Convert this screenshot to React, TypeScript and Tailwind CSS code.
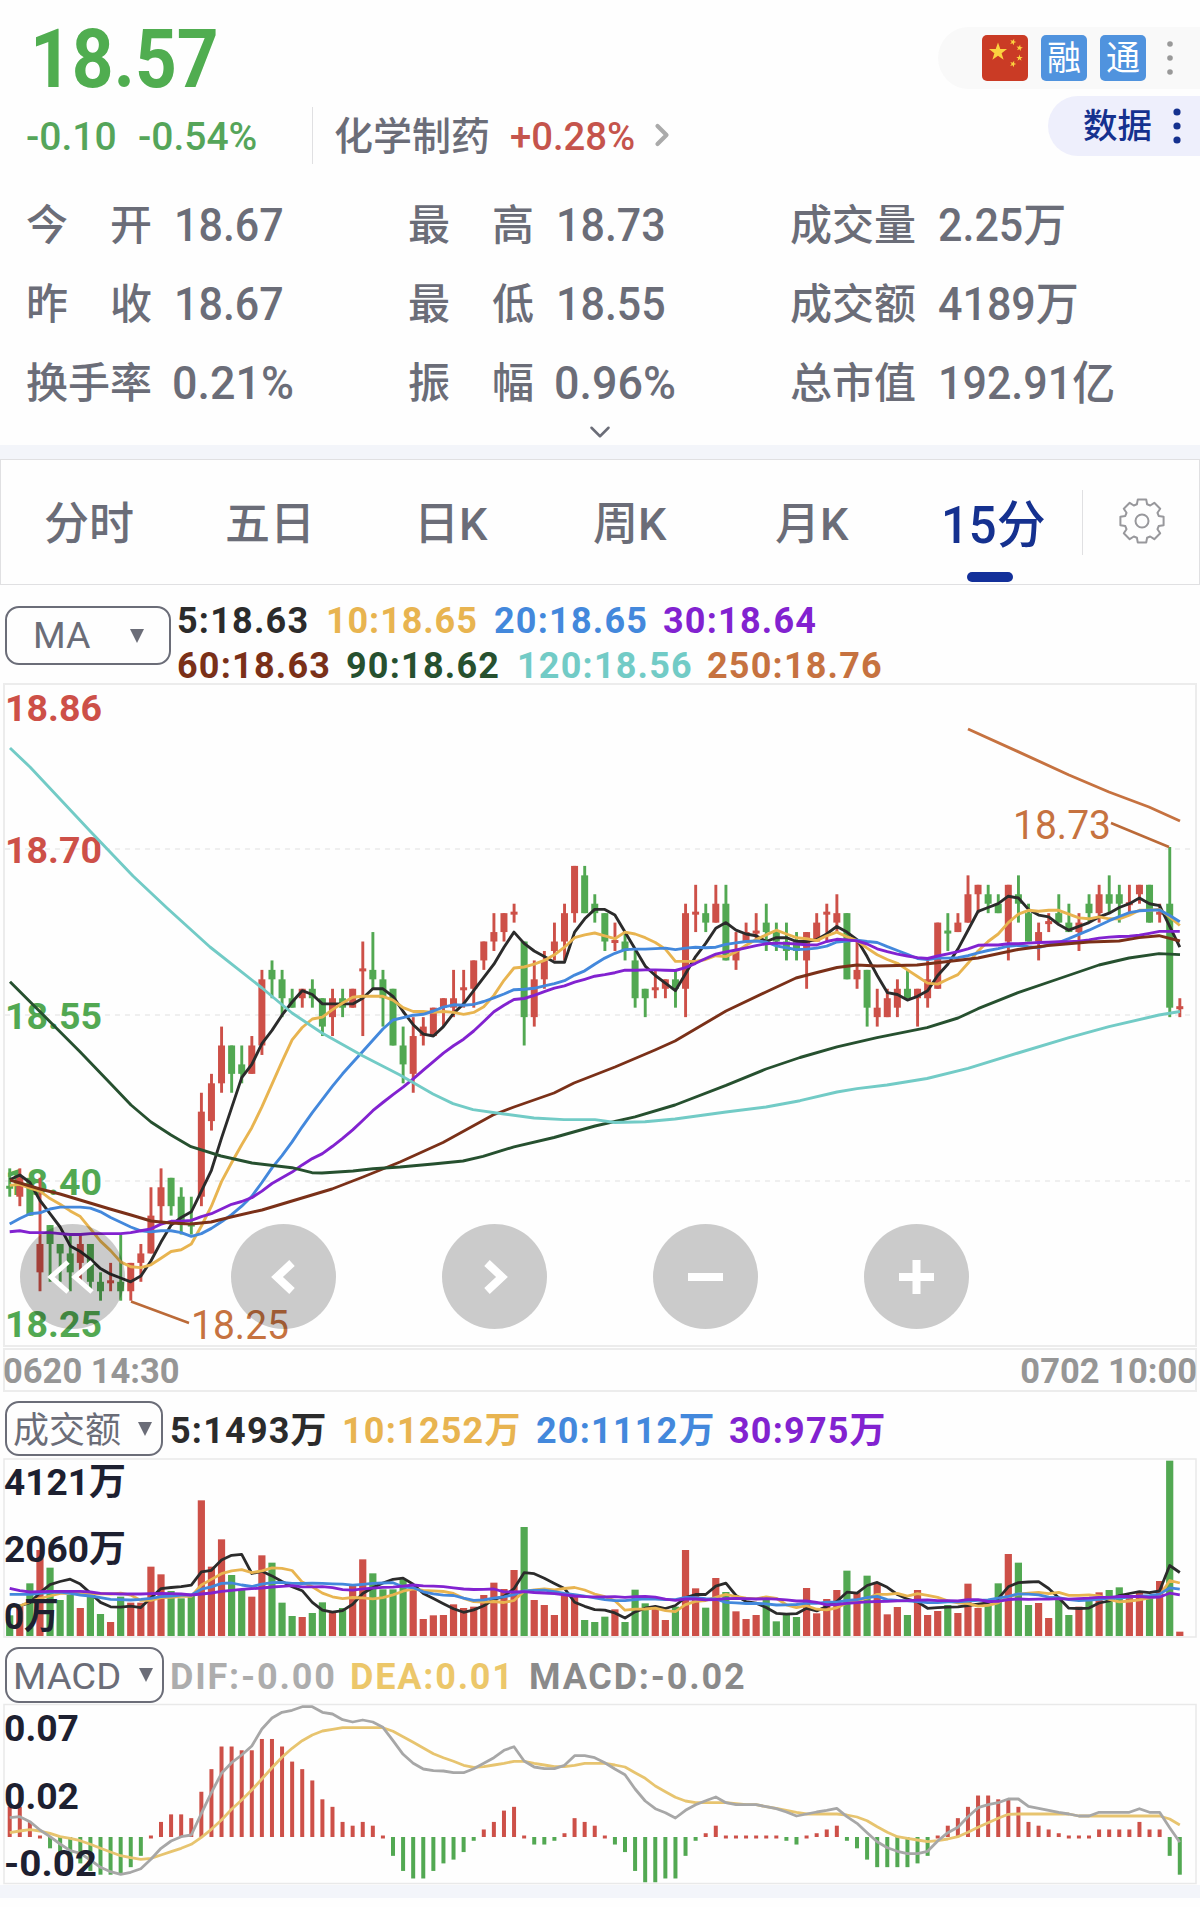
import { ChevronDown, ChevronRight } from "lucide-react";

const RED = "#cd5048";
const GREEN = "#52a852";
const INK = "#2b2b2b";
const GOLD = "#e8b450";
const BLUE = "#4388dc";
const PURPLE = "#8222d0";
const BROWN = "#7a3018";
const FOREST = "#26502f";
const TEAL = "#72cbc6";
const ORANGE = "#c67240";

// [up, high, body top, body bottom, low] in cents above 18.00
const candles: number[][] = [
  [0, 39, 37, 37, 36], [1, 39, 38, 36, 35], [0, 38, 38, 34, 34], [1, 38, 31, 28, 26], [0, 33, 33, 31, 27],
  [0, 31, 31, 30, 27], [0, 32, 30, 28, 26], [1, 32, 31, 29, 27], [0, 31, 31, 27, 26], [0, 28, 27, 26, 25],
  [1, 29, 27, 27, 26], [0, 32, 27, 26, 25], [1, 29, 29, 26, 25], [1, 31, 30, 29, 27], [1, 37, 34, 30, 30],
  [1, 39, 37, 35, 33], [0, 38, 38, 35, 34], [0, 37, 36, 33, 32], [0, 36, 33, 33, 32], [1, 47, 45, 36, 35],
  [1, 49, 48, 44, 43], [1, 54, 52, 48, 47], [0, 52, 52, 49, 47], [0, 52, 50, 49, 48], [1, 53, 52, 49, 49],
  [1, 60, 59, 52, 51], [0, 61, 60, 59, 57], [0, 60, 59, 57, 55], [0, 58, 57, 56, 56], [1, 58, 58, 57, 56],
  [0, 59, 58, 57, 56], [0, 57, 57, 54, 53], [1, 58, 57, 55, 53], [0, 58, 57, 56, 55], [1, 58, 58, 56, 56],
  [1, 63, 60, 60, 53], [0, 64, 60, 59, 58], [0, 60, 59, 57, 54], [0, 58, 58, 52, 52], [0, 54, 52, 50, 48],
  [1, 55, 53, 49, 47], [1, 55, 54, 53, 52], [1, 56, 56, 53, 53], [1, 57, 57, 56, 54], [1, 60, 57, 56, 55],
  [1, 60, 58, 58, 56], [1, 61, 61, 58, 56], [1, 63, 63, 61, 60], [1, 66, 64, 63, 62], [1, 66, 66, 64, 63],
  [1, 67, 66, 66, 65], [0, 63, 63, 55, 52], [1, 61, 59, 55, 54], [1, 62, 61, 59, 58], [1, 65, 63, 62, 61],
  [1, 67, 66, 63, 61], [1, 71, 71, 66, 65], [0, 71, 70, 66, 66], [0, 68, 67, 66, 65], [0, 66, 66, 63, 62],
  [1, 65, 63, 63, 62], [0, 64, 63, 62, 61], [0, 62, 61, 57, 56], [0, 58, 58, 57, 55], [1, 60, 58, 58, 57],
  [1, 59, 59, 58, 57], [0, 60, 59, 58, 56], [1, 67, 66, 58, 55], [1, 69, 66, 66, 64], [0, 67, 66, 65, 64],
  [1, 69, 67, 65, 65], [0, 69, 67, 61, 61], [1, 64, 62, 61, 60], [1, 65, 64, 63, 63], [1, 66, 64, 64, 63],
  [0, 67, 65, 64, 62], [0, 65, 64, 63, 62], [0, 65, 63, 62, 61], [0, 64, 63, 62, 61], [1, 64, 64, 61, 58],
  [1, 66, 65, 63, 63], [1, 67, 66, 66, 63], [1, 68, 66, 65, 64], [0, 66, 66, 59, 59], [1, 63, 60, 59, 58],
  [0, 60, 60, 56, 54], [1, 58, 56, 55, 54], [1, 58, 57, 55, 55], [1, 59, 58, 56, 55], [0, 60, 58, 57, 57],
  [1, 58, 58, 57, 54], [1, 61, 59, 57, 56], [1, 65, 65, 58, 58], [0, 66, 64, 64, 62], [1, 66, 65, 64, 64],
  [1, 70, 68, 65, 65], [1, 69, 69, 68, 66], [0, 69, 68, 67, 66], [0, 68, 67, 66, 66], [1, 69, 69, 63, 61],
  [0, 70, 68, 67, 65], [0, 67, 66, 63, 63], [1, 65, 64, 63, 61], [1, 66, 65, 65, 64], [0, 68, 66, 65, 65],
  [0, 67, 65, 64, 64], [1, 66, 65, 64, 62], [0, 68, 67, 66, 65], [1, 69, 68, 66, 65], [0, 70, 68, 67, 66],
  [0, 69, 68, 67, 65], [1, 69, 67, 67, 66], [1, 69, 69, 68, 67], [0, 69, 69, 65, 65], [1, 67, 66, 66, 65],
  [0, 73, 67, 56, 55], [1, 57, 56, 56, 55],
];

const turnover = [
  62, 88, 158, 258, 205, 108, 123, 84, 123, 66, 42, 118, 100, 100, 208, 185, 135, 113, 123, 407, 208, 290, 183, 138, 118,
  242, 220, 100, 60, 57, 69, 101, 70, 84, 153, 230, 188, 140, 140, 170, 138, 51, 62, 63, 95, 84, 88, 123, 160, 141,
  198, 327, 108, 93, 63, 123, 118, 48, 42, 58, 80, 42, 139, 98, 85, 48, 88, 258, 143, 85, 174, 132, 74, 51, 63,
  108, 44, 63, 57, 144, 68, 111, 138, 196, 131, 181, 158, 65, 87, 63, 138, 63, 75, 93, 69, 157, 84, 93, 158, 246,
  220, 93, 99, 54, 108, 63, 88, 105, 131, 138, 146, 118, 131, 118, 165, 526, 13,
];

const macd = [
  8, 8, 4, 0, -3, -4, -5, -7, -9, -10, -10, -10, -8, -5, 0, 4, 6, 6, 5, 12, 18, 24, 24, 23, 23, 26, 26, 24, 20, 18,
  15, 10, 8, 4, 3, 4, 3, 0, -5, -9, -11, -11, -9, -7, -6, -4, -1, 2, 4, 7, 8, 0, -2, -2, -1, 1, 5, 4, 3, 0,
  -2, -4, -9, -12, -12, -11, -11, -5, -1, 1, 3, 0, 0, 0, 0, 0, 0, -1, -2, 0, 1, 2, 3, -1, -3, -6, -8, -8, -8, -8,
  -7, -5, 0, 3, 5, 8, 11, 11, 10, 10, 8, 4, 3, 2, 1, 0, 0, 0, 2, 2, 2, 2, 4, 2, 2, -5, -10,
];

const dif = [
  533, 530, 545, 570, 590, 612, 632, 640, 660, 682, 695, 703, 697, 686, 658, 625, 603, 590, 585, 520, 458, 400, 368, 345,
  318, 267, 234, 217, 211, 200, 200, 217, 222, 239, 246, 240, 246, 262, 302, 343, 370, 387, 392, 393, 398, 398, 386, 370,
  353, 331, 320, 363, 381, 386, 386, 376, 347, 347, 353, 368, 387, 404, 447, 483, 506, 518, 534, 511, 494, 482, 471, 488,
  494, 494, 494, 500, 506, 516, 528, 522, 516, 511, 505, 530, 550, 578, 605, 623, 634, 641, 641, 634, 603, 578, 562, 530,
  503, 494, 488, 477, 477, 499, 505, 511, 517, 522, 528, 528, 517, 517, 517, 517, 506, 517, 517, 563, 607,
];

const dea = [
  578, 573, 569, 573, 580, 590, 595, 602, 613, 625, 636, 647, 653, 658, 655, 645, 635, 625, 613, 592, 568, 540, 508, 480,
  450, 417, 383, 352, 325, 302, 285, 273, 268, 263, 263, 263, 263, 263, 274, 290, 307, 324, 341, 353, 364, 376, 382, 380,
  375, 370, 364, 364, 370, 375, 380, 380, 376, 370, 370, 370, 375, 381, 398, 415, 438, 455, 472, 483, 488, 488, 488, 488,
  491, 494, 494, 500, 505, 511, 517, 522, 522, 522, 522, 525, 531, 542, 560, 577, 590, 595, 600, 605, 602, 597, 590, 577,
  562, 548, 535, 523, 522, 522, 522, 522, 522, 522, 528, 528, 528, 528, 528, 528, 528, 528, 528, 537, 555,
];

// values of each average before its window is filled by the bars on screen
const priceSeeds: Record<number, number[]> = {
  5: [37.8, 38.3, 37.5, 35.6],
  10: [37.2, 37.3, 36.9, 36.6, 35.8, 35.2, 34.5, 33.9, 32.6],
  20: [33.1, 33.7, 34.2, 34.3, 34.7, 34.9, 34.9, 34.9, 34.8, 34.4, 33.8, 33.3, 32.8, 32.4, 32.3, 32.4, 32.4, 32.2, 31.8],
  30: [32.3, 32.4, 32.2, 32.2, 32.2, 32.1, 32, 32, 32.1, 32.1, 32.1, 32.1, 32.2, 32.4, 32.6, 33.1, 33.4, 33.4, 33.5, 33.9,
    34.2, 34.7, 35.2, 35.5, 35.9, 36.6, 37.4, 38, 38.6],
};
const turnoverSeeds: Record<number, number[]> = {
  5: [88, 90, 100, 130],
  10: [88, 90, 103, 113, 120, 128, 128, 128, 126],
  20: [125, 125, 125, 128, 131, 132, 128, 123, 120, 115, 110, 109, 108, 110, 113, 118, 120, 123, 123],
  30: [143, 136, 132, 133, 134, 134, 134, 134, 132, 128, 127, 126, 126, 126, 127, 128, 127, 126, 123, 126, 129, 134, 137,
    140, 142, 144, 147, 149, 151],
};

const longAverages = [
  { color: BROWN, points: "10,1180 40,1189 60,1194 80,1200 110,1209 131,1215 151,1221 171,1223 191,1224 211,1222 231,1217 262,1210 302,1198 332,1189 363,1177 400,1162 443,1142.5 493,1115 514,1107 554,1093 574,1083 615,1067 655,1050 675,1041 726,1011 766,992 796,978 817,972.5 837,967.5 857,965 877,966 917,965 948,961.5 978,958 1018,949.5 1048,945.5 1089,942 1119,941 1139,937.6 1159,935.7 1180,941" },
  { color: FOREST, points: "10,981.7 50,1021.7 80,1051.7 110,1083 131,1105 151,1122 171,1135 191,1146.7 221,1156 252,1163 292,1167.7 312,1172.7 322,1173 353,1171 373,1168.7 400,1167 433,1164 463,1161 483,1156.4 514,1146.8 554,1137.5 595,1126 635,1116.8 675,1105 726,1085.4 766,1069 800,1057.5 837,1046.9 877,1037.7 927,1027.6 958,1018 978,1008.7 1018,992.7 1058,979 1099,965 1129,958 1159,953.6 1180,954.6" },
  { color: TEAL, points: "10,748 30,767 60,799 90,831 133,876 167,908 210,947 262,988 292,1013 322,1033 363,1056 400,1075 433,1094 453,1103.6 473,1109.6 504,1114 534,1118 564,1119.6 595,1119.6 615,1122.5 645,1121.8 675,1119 726,1112 766,1107 800,1100.7 837,1092 857,1088.6 887,1085 927,1078.5 968,1068.4 1018,1053 1069,1037.7 1109,1026.6 1159,1015 1180,1011.5" },
  { color: ORANGE, points: "968,729 1018,751.6 1069,775 1109,792 1149,807 1180,821" },
];

const barX = (i: number) => 9.7 + 10.087 * i;
const priceY = (p: number) => 847 + (73 - p) * 9.452;

function average(values: number[], n: number, seeds: number[]) {
  return values.map((_, i) => {
    if (i < n - 1) return seeds[i];
    let sum = 0;
    for (let k = i - n + 1; k <= i; k++) sum += values[k];
    return sum / n;
  });
}

function toPoints(values: number[], y: (v: number) => number) {
  return values.map((v, i) => `${barX(i).toFixed(1)},${y(v).toFixed(1)}`).join(" ");
}

const closes = candles.map(([up, , top, bottom]) => (up ? top : bottom));
const shortAverages = [
  { n: 5, color: INK },
  { n: 10, color: GOLD },
  { n: 20, color: BLUE },
  { n: 30, color: PURPLE },
];

type LabelProps = { x: number; y: number; w: number; size?: number; fill: string; weight?: number; children: string };

function Label({ x, y, w, size = 37, fill, weight = 700, children }: LabelProps) {
  return (
    <text x={x} y={y} fontSize={size} fontWeight={weight} fill={fill} textLength={w} lengthAdjust="spacingAndGlyphs">
      {children}
    </text>
  );
}

function PriceChart() {
  return (
    <svg className="absolute inset-0" width="1200" height="664" viewBox="0 683 1200 664">
      <rect x="4" y="684" width="1192" height="662" fill="none" stroke="#ececec" strokeWidth="2" />
      {[849, 1015, 1181].map((y) => (
        <line key={y} x1="5" x2="1190" y1={y} y2={y} stroke="#efefef" strokeWidth="2" strokeDasharray="5 5" />
      ))}
      <Label x={5} y={721} w={97} fill={RED}>18.86</Label>
      <Label x={5} y={863} w={97} fill={RED}>18.70</Label>
      <Label x={5} y={1028.500} w={97} fill={GREEN}>18.55</Label>
      <Label x={5} y={1194.500} w={97} fill={GREEN}>18.40</Label>
      <Label x={5} y={1337} w={97} fill={GREEN}>18.25</Label>
      {candles.map(([up, high, top, bottom, low], i) => (
        <g key={i} fill={up ? RED : GREEN}>
          <rect x={barX(i) - 1.4} y={priceY(high)} width="2.9" height={priceY(low) - priceY(high)} />
          <rect x={barX(i) - 3.5} y={top === bottom ? priceY(top) - 1.5 : priceY(top)} width="7" height={Math.max(3, priceY(bottom) - priceY(top))} />
        </g>
      ))}
      <g fill="none" strokeWidth="2.9" strokeLinejoin="round">
        {shortAverages.map(({ n, color }) => (
          <polyline key={n} points={toPoints(average(closes, n, priceSeeds[n]), priceY)} stroke={color} />
        ))}
        {longAverages.map(({ color, points }) => (
          <polyline key={color} points={points} stroke={color} />
        ))}
        <path d="M131 1301.5 189 1323M1111 823 1169 847" stroke="#bb6a38" strokeWidth="2.5" />
      </g>
      <Label x={191} y={1339} w={98} size={40} fill={ORANGE} weight={400}>18.25</Label>
      <Label x={1013} y={838.500} w={98} size={40} fill={ORANGE} weight={400}>18.73</Label>
    </svg>
  );
}

function ChartControls() {
  const icons = [
    "M38 37 21 52l17 15M62 37 45 52l17 15",
    "M61 39 46 53l15 14",
    "M45 39l15 14-15 14",
    "M35 53h35",
    "M35 53h35M52.500 36v34",
  ];
  return (
    <div className="absolute left-5 top-[541px] flex gap-[106px]">
      {icons.map((d, i) => (
        <button key={d} className="h-[105px] w-[105px] rounded-full bg-black/20">
          <svg width="105" height="105" fill="none" stroke="white" strokeWidth={i === 0 ? 5 : 8}>
            <path d={d} transform={i === 0 ? "translate(10 1)" : undefined} />
          </svg>
        </button>
      ))}
    </div>
  );
}

function TurnoverChart() {
  return (
    <svg className="block" width="1200" height="182" viewBox="0 1457 1200 182">
      <rect x="4" y="1459" width="1192" height="178" fill="none" stroke="#e9e9e9" strokeWidth="1.500" />
      {turnover.map((v, i) => (
        <rect key={i} x={barX(i) - 3.6} y={1636 - v / 3} width="7.200" height={v / 3} fill={candles[i][0] ? RED : GREEN} />
      ))}
      {shortAverages.map(({ n, color }) => (
        <polyline key={n} fill="none" strokeWidth="2.800" strokeLinejoin="round" stroke={color} points={toPoints(average(turnover, n, turnoverSeeds[n]), (v) => 1636 - v / 3)} />
      ))}
      <Label x={4} y={1495} w={122} fill="#1d2030">4121万</Label>
      <Label x={4} y={1562} w={122} fill="#1d2030">2060万</Label>
      <Label x={4} y={1629} w={55} fill="#1d2030">0万</Label>
    </svg>
  );
}

function MacdChart() {
  return (
    <svg className="block" width="1200" height="182" viewBox="0 1703 1200 182">
      <rect x="4" y="1704.500" width="1192" height="179" fill="none" stroke="#e9e9e9" strokeWidth="1.500" />
      {macd.map((v, i) => {
        const h = v === 0 ? 3 : Math.abs(v) * 3.77;
        return (
          <rect key={i} x={barX(i) - 2} y={v < 0 ? 1837 : v === 0 ? 1835.5 : 1837 - h} width="4" height={h} fill={v < 0 ? GREEN : RED} />
        );
      })}
      <g fill="none" strokeWidth="2.800" strokeLinejoin="round">
        <polyline points={toPoints(dea, (v) => 1640 + v / 3)} stroke="#e7c46f" />
        <polyline points={toPoints(dif, (v) => 1640 + v / 3)} stroke="#a7a7a7" />
      </g>
      <Label x={4} y={1740.500} w={75} fill="#1d2030">0.07</Label>
      <Label x={4} y={1808.500} w={75} fill="#1d2030">0.02</Label>
      <Label x={4} y={1875.500} w={93} fill="#1d2030">-0.02</Label>
    </svg>
  );
}

function Triangle() {
  return (
    <svg width="14" height="14" fill="#6b6d78">
      <path d="M0 0h14L7 14z" />
    </svg>
  );
}

function Dots({ color, r }: { color: string; r: number }) {
  return (
    <svg width="10" height="40" fill={color}>
      <circle cx="5" cy="6" r={r} />
      <circle cx="5" cy="20" r={r} />
      <circle cx="5" cy="34" r={r} />
    </svg>
  );
}

const star = "M0-10 2.400-3.200 9.500-3.100 3.800 1.200 5.900 8.100 0 4-5.900 8.100-3.800 1.200-9.500-3.100-2.400-3.200z";

function Flag() {
  return (
    <svg width="46" height="46" viewBox="0 0 46 46">
      <rect width="46" height="46" rx="5" fill="#ca3b25" />
      <g fill="#fbd33f">
        <path d={star} transform="translate(16 17) scale(.95)" />
        <path d={star} transform="translate(31 7) scale(.34) rotate(20)" />
        <path d={star} transform="translate(37.500 13) scale(.34) rotate(10)" />
        <path d={star} transform="translate(37.500 23) scale(.34)" />
        <path d={star} transform="translate(31 29) scale(.34) rotate(20)" />
      </g>
    </svg>
  );
}

function Gear() {
  const pts: string[] = [];
  for (let i = 0; i < 8; i++) {
    [[-17, 17.5], [-11, 22], [11, 22], [17, 17.5]].forEach(([deg, r]) => {
      const a = ((i * 45 + deg) * Math.PI) / 180;
      pts.push(`${(24 + r * Math.sin(a)).toFixed(1)},${(24 - r * Math.cos(a)).toFixed(1)}`);
    });
  }
  return (
    <svg width="48" height="48" fill="none" stroke="#98989c" strokeWidth="2" strokeLinejoin="round">
      <polygon points={pts.join(" ")} />
      <circle cx="24" cy="24" r="6.500" />
    </svg>
  );
}

const stats = [
  ["今开", "18.67"], ["最高", "18.73"], ["成交量", "2.25万"],
  ["昨收", "18.67"], ["最低", "18.55"], ["成交额", "4189万"],
  ["换手率", "0.21%"], ["振幅", "0.96%"], ["总市值", "192.91亿"],
];

export default function App() {
  return (
    <div className="h-[1907px] w-[1200px] overflow-hidden bg-[#fefefe] font-['Roboto','Noto_Sans_CJK_SC',sans-serif] text-[#6b6d78]">
      <header className="relative h-[445px]">
        <div className="h-[98px] pl-[30px] pt-[18px]">
          <div className="inline-block origin-left scale-x-[.89] text-[82px] font-bold leading-[82px] text-[#50ad50]">18.57</div>
        </div>
        <div className="flex h-[76px] items-center pl-[26px] pt-0.5 text-[39px]">
          <div className="flex w-[286px] gap-6 whitespace-nowrap font-medium text-[#55a55a]">
            <span className="w-[88px]">-0.10</span>
            <span className="origin-left">-0.54%</span>
          </div>
          <div className="-mt-1 flex h-[57px] items-center border-l border-[#e0e0e2] pl-[21px] pt-1">
            <span className="w-[176px] font-medium">化学制药</span>
            <span className="w-[134px] origin-left scale-x-[.98] font-medium text-[#c5544c]">+0.28%</span>
            <ChevronRight className="-mt-1 h-9 w-9 text-[#aaa]" strokeWidth={2.8} />
          </div>
        </div>
        <div className="grid grid-cols-[382px_382px_1fr] pl-[26px] pt-3">
          {stats.map(([label, value]) => (
            <div key={label} className="flex h-[79px] items-center font-medium">
              <span className="flex w-[126px] justify-between text-[42px]">
                {label.split("").map((c) => <span key={c}>{c}</span>)}
              </span>
              {value.endsWith("%") ? (
                <span className="ml-5 origin-left scale-x-[.975] whitespace-nowrap text-[46px]">{value}</span>
              ) : (
                <span className="ml-[22px] origin-left scale-x-[.935] whitespace-nowrap text-[46px]">{value}</span>
              )}
            </div>
          ))}
        </div>
        <ChevronDown className="absolute left-[583px] top-[415px] h-[34px] w-[34px]" strokeWidth={1.8} />
        <div className="absolute right-0 top-[27px] flex h-[62px] w-[262px] items-center rounded-l-full bg-[#f9f9f9] pl-11">
          <Flag />
          <div className="ml-[13px] h-[46px] w-[46px] rounded-[5px] bg-[#5093de] text-center text-[34px] leading-[46px] text-white">融</div>
          <div className="ml-[13px] mr-[19px] h-[46px] w-[46px] rounded-[5px] bg-[#5093de] text-center text-[34px] leading-[46px] text-white">通</div>
          <Dots color="#999" r={2.8} />
        </div>
        <div className="absolute right-0 top-24 flex h-[60px] w-[152px] items-center rounded-l-full bg-[#eeeffc] pl-[35px] text-[34.500px] text-[#15318f]">
          <span className="mr-5 mt-0.5 font-medium">数据</span>
          <Dots color="#15318f" r={3.6} />
        </div>
      </header>

      <div className="h-[14px] bg-[#f3f5fa]" />

      <nav className="relative flex h-[126px] items-center border border-[#e0e0e2] text-[45px] font-medium">
        <span className="ml-[43px] mt-1.5 w-[181px]">分时</span>
        <span className="mt-1.5 w-[189px]">五日</span>
        <span className="mt-1.5 w-[179px]">日K</span>
        <span className="mt-1.5 w-[182px]">周K</span>
        <span className="mt-1.5 w-[166px]">月K</span>
        <span className="mt-2 w-[141px] origin-left scale-x-[.96] whitespace-nowrap text-[51px] text-[#15318f]">15分</span>
        <span className="h-[65px] w-px bg-[#e0e0e2]" />
        <span className="-mt-0.5 ml-[35px]"><Gear /></span>
        <span className="absolute left-[966px] top-[112px] h-[10px] w-[46px] rounded-full bg-[#13309a]" />
      </nav>

      <section className="flex h-[98px]">
        <div className="ml-[5px] mt-[21px] flex h-[59px] w-[166px] items-center justify-between rounded-[14px] border-2 border-[#6b6d78] pl-[26px] pr-[25px] text-[36px]">
          <span className="origin-left scale-x-[1.040]">MA</span>
          <Triangle />
        </div>
        <div className="ml-[6px] mt-[13.500px] whitespace-nowrap text-[36px] font-bold leading-[45px] tracking-[1.200px]">
          <div className="flex">
            <span className="w-[149px] text-[#2b2b2b]">5:18.63</span>
            <span className="w-[168px] tracking-[.9px] text-[#e8b450]">10:18.65</span>
            <span className="w-[169px] text-[#4388dc]">20:18.65</span>
            <span className="text-[#8222d0]">30:18.64</span>
          </div>
          <div className="flex">
            <span className="w-[169px] text-[#7a3018]">60:18.63</span>
            <span className="w-[171px] text-[#26502f]">90:18.62</span>
            <span className="w-[190px] text-[#72cbc6]">120:18.56</span>
            <span className="text-[#c67240]">250:18.76</span>
          </div>
        </div>
      </section>

      <section className="relative h-[664px]">
        <PriceChart />
        <ChartControls />
      </section>
      <div className="mx-[3px] mt-px flex h-[44px] items-center justify-between border-2 border-[#ececec] pt-[3px] text-[34.500px] font-bold text-[#969696]">
        <span className="-ml-[2px]">0620 14:30</span>
        <span className="-mr-[2px]">0702 10:00</span>
      </div>

      <section className="flex h-[65px] whitespace-nowrap text-[36px]">
        <div className="ml-[5px] mt-[9px] flex h-[55px] w-[158px] items-center justify-between rounded-[14px] border-2 border-[#6b6d78] pl-[6px] pr-[9px]">
          <span className="mt-1">成交额</span>
          <Triangle />
        </div>
        <div className="ml-[7px] mt-[19px] flex h-10 items-center font-bold tracking-[1.200px]">
          <span className="w-[172px] text-[#2b2b2b]">5:1493万</span>
          <span className="w-[194px] text-[#e8b450]">10:1252万</span>
          <span className="w-[193px] text-[#4388dc]">20:1112万</span>
          <span className="text-[#8222d0]">30:975万</span>
        </div>
      </section>
      <TurnoverChart />

      <section className="flex h-16 whitespace-nowrap text-[36px]">
        <div className="ml-[5px] mt-[8px] flex h-[56px] w-[159px] items-center justify-between rounded-[14px] border-2 border-[#6b6d78] pl-[6px] pr-[9px]">
          <span className="mt-1 origin-left scale-x-[1.060]">MACD</span>
          <Triangle />
        </div>
        <div className="ml-[6px] mt-[18px] flex h-10 items-center font-bold tracking-[1.800px]">
          <span className="w-[180px] text-[#adadad]">DIF:-0.00</span>
          <span className="w-[179px] text-[#ecc76a]">DEA:0.01</span>
          <span className="text-[#8a8a8a]">MACD:-0.02</span>
        </div>
      </section>
      <MacdChart />
      <div className="h-[13px] bg-[#f3f5fa]" />
    </div>
  );
}
